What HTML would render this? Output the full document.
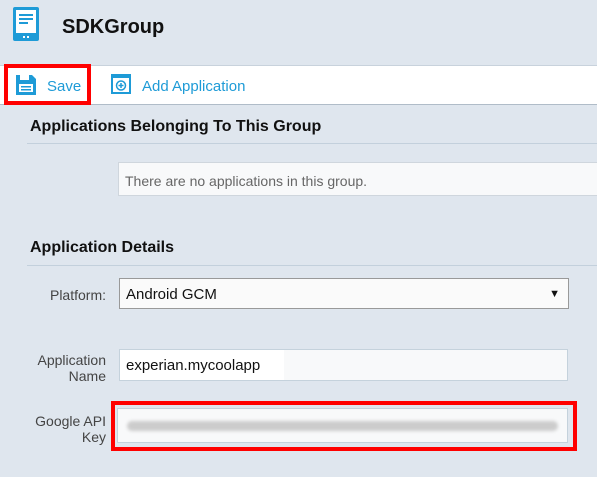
<!DOCTYPE html>
<html><head><style>
body{margin:0;width:597px;height:477px;background:#dfe6ee;font-family:"Liberation Sans",sans-serif;position:relative;overflow:hidden}
.a{position:absolute}
.h{font-weight:bold;font-size:16px;color:#111}
.line{height:1px;background:#c3d0dc;left:27px;right:0}
.lbl{font-size:14px;color:#444;text-align:right;width:106px;left:0;line-height:16px}
</style></head><body>
<svg class="a" style="left:12px;top:6px" width="28" height="36" viewBox="0 0 28 36">
<rect x="1" y="1" width="26" height="34" rx="2" fill="#1e9bd7"/>
<rect x="4" y="4" width="20" height="23" fill="#fff"/>
<rect x="7" y="8" width="14" height="2" fill="#1e9bd7"/><rect x="7" y="12" width="14" height="2" fill="#1e9bd7"/><rect x="7" y="16" width="9" height="2" fill="#1e9bd7"/>
<rect x="11" y="30" width="2" height="2" fill="#fff"/><rect x="15" y="30" width="2" height="2" fill="#fff"/>
</svg>
<div class="a" style="left:62px;top:16px;font-size:20px;font-weight:bold;color:#111">SDKGroup</div>
<div class="a" style="left:0;right:0;top:65px;height:38px;background:#fff;border-top:1px solid #c8d2dc;border-bottom:1px solid #b0bcc8"></div>
<div class="a" style="left:4px;top:64px;width:79px;height:33px;border:4px solid #f00"></div>
<svg class="a" style="left:15px;top:74px" width="22" height="22" viewBox="0 0 22 22">
<path d="M1 1h16l4 4v16H1z" fill="#1e9bd7"/><rect x="5" y="1" width="9" height="5" fill="#fff"/><rect x="4" y="10" width="14" height="8" fill="#fff"/><rect x="6" y="12" width="10" height="1.5" fill="#1e9bd7"/><rect x="6" y="15" width="10" height="1.5" fill="#1e9bd7"/>
</svg>
<div class="a" style="left:47px;top:78px;font-size:15px;color:#1e9bd7">Save</div>
<svg class="a" style="left:111px;top:74px" width="20" height="20" viewBox="0 0 20 20">
<rect x="1" y="1" width="18" height="18" fill="none" stroke="#1e9bd7" stroke-width="2"/><rect x="1" y="1" width="18" height="3" fill="#1e9bd7"/>
<circle cx="10" cy="11.5" r="4.5" fill="none" stroke="#1e9bd7" stroke-width="1.5"/><path d="M10 9v5M7.5 11.5h5" stroke="#1e9bd7" stroke-width="1.5"/>
</svg>
<div class="a" style="left:142px;top:78px;font-size:15px;color:#1e9bd7">Add Application</div>
<div class="a h" style="left:30px;top:118px">Applications Belonging To This Group</div>
<div class="a line" style="top:143px"></div>
<div class="a" style="left:118px;right:0;top:162px;height:32px;background:#f8f9fa;border:1px solid #cfd6dd;border-right:none;font-size:14px;color:#666;line-height:36px;padding-left:6px">There are no applications in this group.</div>
<div class="a h" style="left:30px;top:239px">Application Details</div>
<div class="a line" style="top:265px"></div>
<div class="a lbl" style="top:287px">Platform:</div>
<div class="a" style="left:119px;top:278px;height:29px;background:#fafafa;border:1px solid #999;font-size:15px;color:#111;line-height:31px;padding-left:6px;box-sizing:content-box;width:442px">Android GCM<span style="position:absolute;right:8px;font-size:11px">▼</span></div>
<div class="a lbl" style="top:352px">Application<br>Name</div>
<div class="a" style="left:119px;top:349px;width:447px;height:30px;background:#f8f9fa;border:1px solid #c5d2dc"><div style="position:absolute;left:0;top:0;width:164px;height:30px;background:#fff;font-size:15px;color:#111;line-height:32px;padding-left:6px;box-sizing:border-box">experian.mycoolapp</div></div>
<div class="a lbl" style="top:413px">Google API<br>Key</div>
<div class="a" style="left:111px;top:401px;width:458px;height:42px;border:4px solid #f00"></div>
<div class="a" style="left:117px;top:408px;width:449px;height:33px;background:#f8f9fa;border:1px solid #c5d2dc"><div style="position:absolute;left:9px;right:9px;top:12px;height:10px;border-radius:5px;background:#ccc;filter:blur(1.5px)"></div></div>
</body></html>
